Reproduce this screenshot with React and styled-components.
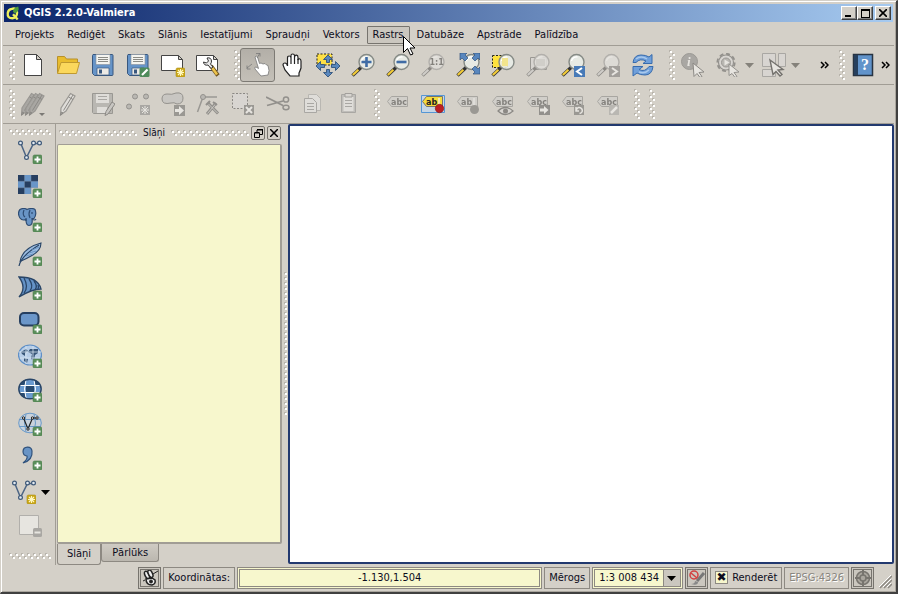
import React from 'react';
import styled, { createGlobalStyle } from 'styled-components';

const GlobalStyle = createGlobalStyle`
  * {
    box-sizing: border-box;
  }
  body {
    margin: 0;
    background: #d4d0c8;
    color: #0c0c1c;
    font: 11px/14px 'DejaVu Sans Condensed', 'Noto Sans', sans-serif;
  }
  button, input, select {
    font: inherit;
    color: inherit;
    margin: 0;
    padding: 0;
  }
  svg {
    display: block;
    flex: none;
  }
`;

const Window = styled.div`
  display: flex;
  flex-direction: column;
  min-height: 100vh;
  padding: 2px;
  background: #d4d0c8;
  border: 1px solid #d4d0c8;
  border-right: 2px solid #404040;
  border-bottom: 2px solid #404040;
  box-shadow: inset 1px 1px 0 #fff, inset -1px -1px 0 #aaa69e;
`;

const TitleBar = styled.header`
  display: flex;
  align-items: center;
  height: 18px;
  margin: 1px 1px 0;
  padding: 0 2px 0 2px;
  background: linear-gradient(90deg, #0a246a, #a6caf0);
`;

const Title = styled.h1`
  flex: 1;
  margin: 0 0 0 4px;
  color: #fff;
  font-size: 11px;
  line-height: 14px;
`;

const CaptionButton = styled.button`
  display: flex;
  align-items: center;
  justify-content: center;
  width: 16px;
  height: 14px;
  margin-left: ${props => (props.$apart ? '2px' : '0')};
  background: #d4d0c8;
  border: 1px solid;
  border-color: #fff #404040 #404040 #fff;
  box-shadow: inset -1px -1px 0 #808080;
`;

const MenuBar = styled.nav`
  display: flex;
  align-items: center;
  gap: 1px;
  height: 24px;
  padding: 2px 6px 0;
  border-bottom: 1px solid #a19d95;
`;

const MenuItem = styled.button`
  position: relative;
  height: 18px;
  padding: 0 5px;
  white-space: nowrap;
  border: 1px solid ${props => (props.$hover ? '#77746e' : 'transparent')};
  border-radius: 1px;
  background: ${props => (props.$hover ? '#cbc7bf' : 'none')};
`;

const Pointer = styled.svg`
  position: absolute;
  right: -6px;
  top: 9px;
  z-index: 2;
`;

const ToolRow = styled.div`
  display: flex;
  align-items: center;
  height: 39px;
  padding: 0 3px 0 6px;
  border-bottom: 1px solid #a19d95;
`;

const ToolButton = styled.button`
  display: flex;
  align-items: center;
  justify-content: center;
  flex: none;
  width: ${props => (props.$narrow ? '11px' : '35px')};
  height: 34px;
  border: 1px solid ${props => (props.$pressed ? '#7d7a74' : 'transparent')};
  border-radius: 3px;
  background: ${props =>
    props.$pressed ? 'linear-gradient(#b3afa8, #c4c0b8)' : 'none'};
  &:disabled svg {
    filter: grayscale(1);
    opacity: 0.45;
  }
`;

const Grip = styled.svg`
  width: 6px;
  height: 30px;
  margin-left: ${props => (props.$gap ? props.$gap : '0')};
`;

const FlatGrip = styled.svg`
  width: 42px;
  height: 6px;
`;

const Spacer = styled.div`
  flex: ${props => (props.$width ? `0 0 ${props.$width}` : '1')};
`;

const Main = styled.main`
  display: flex;
  flex: 1;
  padding-left: 1px;
`;

const SideBar = styled.div`
  display: flex;
  flex-direction: column;
  align-items: center;
  width: 52px;
  padding: 5px 0 6px;
  border-right: 1px solid #a19d95;
`;

const SideRow = styled.div`
  display: flex;
  align-items: center;
  width: 51px;
  height: 34px;
  padding-left: ${props => (props.$menu ? '2px' : '8px')};
`;

const DropIcon = styled.svg`
  width: 9px;
  height: 5px;
  margin-right: 2px;
`;

const Dock = styled.aside`
  display: flex;
  flex-direction: column;
  width: 226px;
  padding-left: 1px;
`;

const DockTitle = styled.div`
  display: flex;
  align-items: center;
  gap: 2px;
  height: 20px;
  padding: 0 1px 2px 2px;
  h2 {
    margin: 0 4px;
    font-size: 10px;
    font-weight: normal;
  }
`;

const DockGrip = styled.svg`
  flex: 1 1 0;
  min-width: 0;
  height: 6px;
`;

const DockButton = styled.button`
  display: flex;
  align-items: center;
  justify-content: center;
  width: 14px;
  height: 14px;
  background: #d4d0c8;
  border: 1px solid #77746e;
  border-radius: 2px;
`;

const LayerTree = styled.div`
  flex: 1;
  background: #f7f7cd;
  border: 2px solid #a19d95;
  border-width: 1px 2px 2px 1px;
  border-radius: 2px;
`;

const Tabs = styled.div`
  display: flex;
  align-items: flex-start;
  height: 21px;
`;

const Tab = styled.button`
  height: ${props => (props.$active ? '21px' : '18px')};
  padding: 0 ${props => (props.$active ? '9px' : '10px')};
  border: 1px solid #8d8982;
  border-top: 0;
  border-radius: 0 0 3px 3px;
  background: ${props =>
    props.$active ? '#d4d0c8' : 'linear-gradient(#cfcbc3, #bbb7af)'};
`;

const Splitter = styled.div`
  display: flex;
  align-items: center;
  width: 6px;
  padding-left: 2px;
`;

const MapCanvas = styled.section`
  flex: 1;
  margin-bottom: 1px;
  background: #fff;
  border: 2px solid #22396f;
  border-radius: 2px;
`;

const StatusBar = styled.footer`
  display: flex;
  align-items: center;
  gap: 2px;
  height: 25px;
  padding: 0 2px 0 0;
`;

const Cell = styled.label`
  display: flex;
  align-items: center;
  justify-content: center;
  gap: 4px;
  height: 22px;
  padding: 0 4px;
  white-space: nowrap;
  border: 1px solid #8d8982;
  color: ${props => (props.$off ? '#89867f' : 'inherit')};
  text-shadow: ${props => (props.$off ? '1px 1px 0 #fff' : 'none')};
`;

const StatusButton = styled.button`
  display: flex;
  align-items: center;
  justify-content: center;
  width: 23px;
  height: 22px;
  background: #cbc7bf;
  border: 3px double #77746e;
`;

const Coordinates = styled.input`
  flex: 1;
  min-width: 80px;
  height: 22px;
  text-align: center;
  background: #f7f7cd;
  border: 3px double #8d8982;
`;

const ScaleBox = styled.div`
  display: flex;
  align-items: center;
  position: relative;
  width: 91px;
  height: 22px;
  border: 3px double #8d8982;
  background: #f7f7cd;
  svg {
    position: absolute;
    right: 0;
    top: 0;
    pointer-events: none;
  }
`;

const ScaleSelect = styled.select`
  appearance: none;
  width: 100%;
  height: 16px;
  padding-left: 4px;
  border: 0;
  background: none;
`;

const Tick = styled.input`
  appearance: none;
  width: 13px;
  height: 13px;
  border: 1px solid #8d8982;
  background: #f7f7cd;
  display: grid;
  place-items: center;
  &:checked::before {
    content: '✖';
    font: 12px/11px 'DejaVu Sans', sans-serif;
  }
`;

const Icon = ({ children, size = 24 }) => (
  <svg width={size} height={size} viewBox="0 0 24 24" fill="none" aria-hidden="true">
    {children}
  </svg>
);

const Plus = () => (
  <>
    <rect x="15" y="15" width="9" height="9" rx="1.5" fill="#5b8f5b" stroke="#4a7d4b" strokeWidth=".6" />
    <path d="M19.5 16.5v6M16.5 19.5h6" stroke="#fff" strokeWidth="1.8" />
  </>
);

const Star = () => (
  <>
    <rect x="15" y="15" width="9" height="9" rx="1.5" fill="#cba81a" stroke="#ad8d10" strokeWidth=".6" />
    <path d="M19.5 16v7M16 19.5h7M17 17l5 5M22 17l-5 5" stroke="#fff8c0" strokeWidth="1.1" />
  </>
);

const Lens = ({ children }) => (
  <>
    <path d="M1.5 22.5L10 14.5" stroke="#333" strokeWidth="3.4" />
    <path d="M1.8 22L7.4 16.8" stroke="#f3cc38" strokeWidth="2.2" />
    <circle cx="15.5" cy="9" r="7.5" fill="#e9ece7" fillOpacity=".9" stroke="#858a85" strokeWidth="1.4" />
    <path d="M10.5 8a5 5 0 0 1 6-4" stroke="#fff" strokeWidth="1.4" />
    {children}
  </>
);

const Disk = () => (
  <>
    <path d="M2 1.5h19q1 0 1 1v19q0 1-1 1H3.5L1.5 20.500V2.500z" fill="#6694c8" stroke="#38577e" />
    <path d="M5 1.500h14v10H5z" fill="#f4f4f0" stroke="#8a9099" strokeWidth=".6" />
    <path d="M7 4.500h10M7 6.500h10M7 8.500h10" stroke="#8b8b85" />
    <path d="M6 15h12v7H6z" fill="#eceae5" stroke="#38577e" strokeWidth=".7" />
    <path d="M8 16.500h3v4H8z" fill="#38577e" />
  </>
);

const Label = ({ text = 'abc', children, fill = '#d0cec8' }) => (
  <>
    <path d="M5.500 4.500H21.500V14.500H5.500L1.500 9.500z" fill={fill} stroke="#77746e" />
    <text x="5" y="12.500" fontSize="8" fontWeight="bold" fontFamily="DejaVu Sans, sans-serif" fill="#222">
      {text}
    </text>
    {children}
  </>
);

const Nodes = () => (
  <>
    <path d="M3 4L8.500 17.500L15.500 3.500h6" stroke="#4b6484" strokeWidth="1.5" />
    <g fill="#e4ebf2" stroke="#3d5878" strokeWidth="1.2">
      <circle cx="2.500" cy="3" r="1.900" />
      <circle cx="8.500" cy="17.500" r="1.900" />
      <circle cx="15.500" cy="3" r="1.900" />
      <circle cx="21.500" cy="3" r="1.900" />
    </g>
  </>
);

const Pencil = ({ x = 0, fill = '#eee' }) => (
  <g transform={`translate(${x} 0)`}>
    <path d="M14.500 1.500l4.500 2.500-9 15-5.500 4 .5-7z" fill={fill} stroke="#555" strokeWidth="1.200" />
    <path d="M17 3L7.500 18.500M12.500 5l4.500 2.500M4.500 23l1-3 1.500 1z" stroke="#333" />
  </g>
);

const MoveArrows = () => (
  <path
    d="M12 2l4.500 4.500h-3v3h-3v-3h-3zM12 24l-4.500-4.500h3v-3h3v3h3zM0 13l4.500-4.500v3h4v3h-4v3zM24 13l-4.500-4.500v3h-4v3h4v3z"
    fill="#5987be"
    stroke="#30527c"
    strokeWidth=".9"
  />
);

const drawings = {
  blank: <path d="M3.500 1.500h12l5 5v16h-17zM15.500 1.500v5h5" fill="#fff" stroke="#444" />,
  open: (
    <>
      <path d="M1.500 20V3.500h7l2 2.500h11v4" fill="#e9bd2e" stroke="#b7902a" />
      <path d="M1.500 20.500L5 9.500h18.500L20.500 20.500z" fill="#fbd85c" stroke="#c09a30" />
    </>
  ),
  save: <Disk />,
  saveAs: (
    <>
      <Disk />
      <rect x="13.500" y="14.500" width="10" height="9.500" rx="1.500" fill="#4e8b5a" />
      <path d="M16 22l5.500-5.500" stroke="#fff" strokeWidth="2.200" />
    </>
  ),
  composer: (
    <>
      <path d="M.5 2.500h17l4 4v11H.5zM17.500 2.500v4h4" fill="#fff" stroke="#444" />
      <Star />
    </>
  ),
  manager: (
    <>
      <path d="M.5 2.500h17l4 4v11H.5zM17.500 2.500v4h4" fill="#fff" stroke="#444" />
      <path d="M15 13l7 9.500" stroke="#6f5520" strokeWidth="4" />
      <path d="M16 14.500l5 7" stroke="#edc34b" strokeWidth="2.500" />
      <path d="M11 5q4-1 4.500 3 0 2-1 3l2.500 3-2 1.500-3-3.500q-4 1-4.500-3l3 1 2-2z" fill="#e8e8e8" stroke="#333" />
    </>
  ),
  touch: (
    <>
      <path d="M9 4q1-2 2.500 0l2 6.500 1.500-.5 2 1 2-.5 1.500 1.500 1.500.5 1 5-1 4.500-7 1-6-7q-1-2 1-2l2.500 1.500z" fill="#fff" stroke="#777" strokeWidth=".8" />
      <path d="M1 15l5-4M11 5l3-5M1 12.500v3.500h3.500M10 .5h4v3" stroke="#777" strokeWidth=".8" />
    </>
  ),
  hand: (
    <>
      <path
        d="M6.500 13V5q0-2 1.700-2T10 5V2.500Q10 1 11.700 1t1.800 1.500V4Q14 2 15.500 2.200T17 4.500V7q.5-1.500 1.700-1.200T20 8v7q-1 3-2 5v3H9L4 17 2 12q0-2 2-2t2.500 3z"
        fill="#fff" stroke="#222" strokeWidth="1.200"
      />
      <path d="M10 5v6M13.500 4v7M17 6v5" stroke="#222" strokeWidth="1.200" />
    </>
  ),
  panSelection: (
    <>
      <path d="M1 1h15v11H1z" fill="#fde047" stroke="#222" strokeDasharray="2 1.500" />
      <MoveArrows />
    </>
  ),
  zoomIn: <Lens><path d="M15.500 4v10M10.500 9h10" stroke="#3f6ca5" strokeWidth="2.600" /></Lens>,
  zoomOut: <Lens><path d="M10.500 9h10" stroke="#3f6ca5" strokeWidth="2.600" /></Lens>,
  actual: (
    <Lens>
      <text x="8.500" y="12" fontSize="8" fontWeight="bold" fontFamily="DejaVu Sans, sans-serif" fill="#222">1:1</text>
    </Lens>
  ),
  full: (
    <>
      <Lens />
      <path
        d="M4 0h7L9 2l3 3-3 3-3-3-2 2zM24 0v7l-2-2-3 3-3-3 3-3-2-2zM24 21h-7l2-2-3-3 3-3 3 3 2-2z"
        fill="#5987be" stroke="#30527c" strokeWidth=".7"
      />
    </>
  ),
  zoomSelection: (
    <>
      <path d="M1.500 2.500h15v12h-15z" fill="#ffe23c" stroke="#222" strokeDasharray="2 1.500" />
      <Lens><path d="M11 5h6v8h-6z" fill="#f2e58d" /></Lens>
    </>
  ),
  zoomLayer: (
    <>
      <path d="M4.500 4.500h16v12h-16z" fill="#ddd" stroke="#555" />
      <Lens><path d="M10 6h9v7h-9z" fill="#ccc" /></Lens>
    </>
  ),
  zoomLast: (
    <Lens>
      <path d="M13 13h11v11H13z" fill="#477ab7" />
      <path d="M21 15l-5 3.500 5 3.500" stroke="#fff" strokeWidth="2" />
    </Lens>
  ),
  zoomNext: (
    <Lens>
      <path d="M13 13h11v11H13z" fill="#666" />
      <path d="M16 15l5 3.500-5 3.500" stroke="#fff" strokeWidth="2" />
    </Lens>
  ),
  refresh: (
    <>
      <path d="M2 9.500Q3 2 10 2q5 0 8 2l3-2.500v9h-9l3-2.500q-6-3-10 1.500z" fill="#6f9fda" stroke="#376bad" />
      <path d="M22 13.500q-1 8.500-8 8.500-5 0-8-2l-4 3v-9.500h10l-4 3q6 3 10-3z" fill="#6f9fda" stroke="#376bad" />
      <path d="M5 6q5-4 11 0M8 19q6 2 10-2" stroke="#a9c9ec" strokeWidth="1.500" />
    </>
  ),
  identify: (
    <>
      <circle cx="8.500" cy="8.500" r="8" fill="#777" stroke="#555" />
      <text x="6" y="13" fontSize="13" fontWeight="bold" fontStyle="italic" fontFamily="Liberation Serif, serif" fill="#fff">i</text>
      <path d="M12 10l11 9-5 .5 3 4-2 1-3-4-3 3z" fill="#fff" stroke="#333" />
    </>
  ),
  action: (
    <>
      <circle cx="10" cy="9.500" r="8.700" stroke="#444" strokeWidth="1.800" strokeDasharray="4 2.800" />
      <circle cx="10" cy="9.500" r="7.500" fill="#ddd" stroke="#444" strokeWidth="1.200" />
      <circle cx="10" cy="9.500" r="4.500" fill="#999" stroke="#555" />
      <path d="M8.500 6.500l5 3-5 3z" fill="#fff" />
      <path d="M13 11l10 8-5 .5 3 4-2 1-3-4-3 2z" fill="#fff" stroke="#444" />
    </>
  ),
  select: (
    <>
      <path d="M.5 .5h13v13H.5zM16.500 .5h7v13h-7zM.5 16.500h13v7H.5z" fill="#ddd" stroke="#777" />
      <path d="M8 7l13 9.500-5 .5 4 4.500-2 1.500-4-4.500-3 3z" fill="#fff" stroke="#000" strokeWidth="1.400" />
    </>
  ),
  help: (
    <>
      <path d="M2.500 1.500h19v21h-19z" fill="#6193ca" stroke="#273342" strokeWidth="1.500" />
      <path d="M3 2h4v20H3z" fill="#263f5d" />
      <text x="10" y="17" fontSize="16" fontWeight="bold" fontFamily="Liberation Serif, serif" fill="#fff">?</text>
    </>
  ),
  edits: (
    <>
      <Pencil x={-4} fill="#777" />
      <Pencil fill="#777" />
      <Pencil x={4} fill="#777" />
      <path d="M18 21h6l-3 3z" fill="#111" />
    </>
  ),
  pencil: <Pencil />,
  saveEdits: (
    <>
      <path d="M1.500 1.500h20v20h-19l-1-1z" fill="#999" stroke="#555" />
      <path d="M5 2h13v9H5z" fill="#eee" />
      <path d="M7 4.500h9M7 7.500h9" stroke="#777" />
      <path d="M6 15h10v6H6z" fill="#eee" />
      <path d="M21 10l3 2-7 10-3 1.500 1-4z" fill="#bbb" stroke="#333" />
    </>
  ),
  addPoint: (
    <>
      <g fill="#999" stroke="#444">
        <circle cx="3" cy="14.500" r="2.500" />
        <circle cx="9" cy="4.500" r="2.500" />
        <circle cx="20" cy="4.500" r="2.500" />
      </g>
      <path d="M14 13h10v10H14z" fill="#777" />
      <path d="M19 14v8M15 18h8M16 15l6 6M22 15l-6 6" stroke="#fff" />
    </>
  ),
  moveFeature: (
    <>
      <path d="M1 7q0-5 5-5 5 1 9-1 7-1 7 5 0 6-6 6-3-2-6-1-9 2-9-4z" fill="#bbb" stroke="#444" />
      <path d="M13 13h11v11H13z" fill="#555" />
      <path d="M14 17h4v-3l5 4.500-5 4.500v-3h-4z" fill="#fff" />
    </>
  ),
  nodeTool: (
    <>
      <path d="M1.500 20L7 5l14 0" stroke="#555" strokeWidth="1.500" />
      <circle cx="7" cy="5" r="2.500" fill="#999" stroke="#444" />
      <path d="M12 11l10 10.500M20 11l-9 11" stroke="#444" strokeWidth="3" />
      <path d="M12.500 12l9 9M19.500 12l-8 9.500" stroke="#bbb" />
      <path d="M10 13l4-4M17 10l4 3" stroke="#444" strokeWidth="2" />
    </>
  ),
  remove: (
    <>
      <path d="M1.500 1.500h15v15h-15z" fill="#ddd" stroke="#333" strokeDasharray="2 1.500" />
      <path d="M13 13h10v10H13z" fill="#555" />
      <path d="M15 15l6 6M21 15l-6 6" stroke="#fff" strokeWidth="2" />
    </>
  ),
  cut: (
    <>
      <path d="M0 5l17 8.500M1 13.500l16-4.500" stroke="#444" strokeWidth="1.800" />
      <circle cx="20" cy="7.500" r="2.600" stroke="#444" strokeWidth="1.500" />
      <ellipse cx="20" cy="15.500" rx="3" ry="2.200" stroke="#444" strokeWidth="1.500" />
    </>
  ),
  copy: (
    <>
      <path d="M7.500 2.500h8l4 4v12h-12z" fill="#eee" stroke="#999" />
      <path d="M3.500 6.500h8l4 4v10h-12z" fill="#eee" stroke="#777" />
      <path d="M6 11.500h7M6 14.500h7M6 17.500h7" stroke="#777" />
    </>
  ),
  paste: (
    <>
      <path d="M5.500 2.500h14v18h-14z" fill="#aaa" stroke="#777" />
      <path d="M7.500 5h10v14h-10z" fill="#eee" />
      <path d="M9 1.500h7V5H9z" fill="#ddd" stroke="#666" />
      <path d="M9 8.500h7M9 11.500h7M9 14.500h7" stroke="#777" />
    </>
  ),
  label: <Label />,
  pinLabels: (
    <>
      <path d="M.5 3.500h23v17H.5z" fill="#c7d6e5" stroke="#5596d5" />
      <Label text="ab" fill="#f6dc3c">
        <path d="M18 6v8" stroke="#f5efc0" strokeWidth="1.800" />
        <circle cx="18.500" cy="16.500" r="4.200" fill="#bd1f24" stroke="#7f1418" strokeWidth=".6" />
      </Label>
    </>
  ),
  pinLabel: (
    <Label text="ab">
      <path d="M18 6v8" stroke="#eee" strokeWidth="2" />
      <circle cx="18.500" cy="17.500" r="4.500" fill="#555" />
    </Label>
  ),
  showLabel: (
    <Label>
      <path d="M7 19q7-7 15 0-8 7-15 0z" fill="#ddd" stroke="#333" strokeWidth="1.200" />
      <circle cx="14.500" cy="19" r="2.500" fill="#333" />
    </Label>
  ),
  moveLabel: (
    <Label>
      <path d="M13 13h11v10H13z" fill="#444" />
      <path d="M14 16.500h4V14l4.500 4-4.500 4v-2.500h-4z" fill="#fff" />
    </Label>
  ),
  rotateLabel: (
    <Label>
      <path d="M13 13h10v10H13z" fill="#555" />
      <path d="M15.500 19.500a3 3 0 1 1 3 2M15 15v4h3" stroke="#fff" strokeWidth="1.500" />
    </Label>
  ),
  changeLabel: (
    <Label>
      <path d="M13 13h10v10H13z" fill="#999" />
      <path d="M15 21l6-6" stroke="#fff" strokeWidth="2.500" />
    </Label>
  ),
  vector: <><Nodes /><Plus /></>,
  raster: (
    <>
      <path d="M0 1h20v19H0z" fill="#6996c8" />
      <path d="M0 1h6.500v6.300H0zM13 1h7v6.300h-7zM6.500 7.300H13v6.400H6.500zM0 13.700h6.500V20H0z" fill="#263e60" />
      <path d="M13 13.700h7V20h-7z" fill="#d4d0c8" />
      <path d="M6.500 1v19M13 1v19M0 7.300h20M0 13.700h20" stroke="#7588a0" strokeWidth=".5" />
      <Plus />
    </>
  ),
  postgis: (
    <>
      <path d="M2 1.500q4-2 7 0 5-2 8 0 2 5-1 9h-2q1 7-3 7-3 0-3-6Q4 13 2 10q-3-5 0-8.500z" fill="#6994c5" stroke="#2e4c73" strokeWidth="1.200" />
      <path d="M6 2Q4 7 7 9M12 2q-2 4 0 8M8 10v3M14 4v2M14 11q3 2 4 0" stroke="#2e4c73" strokeWidth="1.200" />
      <Plus />
    </>
  ),
  spatialite: (
    <>
      <path d="M2 20Q4 6 23 1q0 8-10 13-5 3-10 5" fill="#9cbce0" stroke="#294567" strokeWidth="1.100" />
      <path d="M1 24Q3 14 21 3" stroke="#294567" strokeWidth="1.200" />
      <path d="M8 14l7-2M11 11l7-2M14 8l7-3" stroke="#6994c5" />
      <Plus />
    </>
  ),
  mssql: (
    <>
      <path d="M1 1q19 0 22 12-9 0-22 8Q9 12 1 1z" fill="#6593c7" stroke="#294567" strokeWidth="1.300" />
      <path d="M6 2q5 9 0 15M11 3q5 7 1 12M16 5q4 5 1 9M20 9q1 2 0 4" stroke="#294567" strokeWidth="1.300" />
      <Plus />
    </>
  ),
  oracle: (
    <>
      <rect x="2" y="3" width="18.500" height="12.500" rx="4" fill="#6b96c9" stroke="#263f60" strokeWidth="2" />
      <Plus />
    </>
  ),
  wms: (
    <>
      <ellipse cx="12" cy="11" rx="11.500" ry="10" fill="#b8cee7" stroke="#5e8fc7" strokeWidth="1.200" />
      <path d="M3 8l5-3 2 2-3 2v3l-3-2zM12 5l8 0v4l-3 2-1 5-3-1 1-5-4-2zM6 14l4 1-1 4-3-2z" fill="#375577" />
      <path d="M1 8h22M2 14h20M8 2v18M15 2v18" stroke="#d7e4f1" strokeWidth=".8" />
      <Plus />
    </>
  ),
  wcs: (
    <>
      <ellipse cx="12" cy="11" rx="11.200" ry="9.800" fill="#6b9bd0" />
      <path d="M8 8h8v6H8zM8 1.500Q3 3 1.500 7.500H6.500zM16 1.500q5 1.500 6.500 6H17.500zM1.500 14.500h5L8 20.500Q3 19 1.500 14.500zM22.500 14.500h-5L16 20.500z" fill="#294b70" />
      <path d="M1 7.500h22M1 14.500h22M8 2q-3 9 0 18M16 2q3 9 0 18" stroke="#fff" />
      <ellipse cx="12" cy="11" rx="11.200" ry="9.800" stroke="#294567" strokeWidth="1.400" />
      <Plus />
    </>
  ),
  wfs: (
    <>
      <ellipse cx="12" cy="11" rx="11.300" ry="9.800" fill="#c9d2dc" stroke="#6a9ac9" />
      <path d="M1 7.500h22M1 14.500h22M8 2q-3 9 0 18M16 2q3 9 0 18" stroke="#6a9ac9" />
      <path d="M5.500 6l4.500 11L14.500 6H19" stroke="#222" strokeWidth="1.200" />
      <g fill="#ddd" stroke="#222">
        <circle cx="5.500" cy="6" r="1.200" />
        <circle cx="10" cy="17" r="1.200" />
        <circle cx="14.500" cy="6" r="1.200" />
        <circle cx="19" cy="6" r="1.200" />
      </g>
      <Plus />
    </>
  ),
  csv: (
    <>
      <path d="M9 10a4.500 4.500 0 1 1 5-5q1 9-9 12 5-4 4-7z" fill="#6994c5" stroke="#30527c" strokeWidth="1.200" />
      <Plus />
    </>
  ),
  minus: (
    <>
      <path d="M1.500 1.500h19v19h-19z" fill="#fff" stroke="#888" />
      <rect x="15" y="14" width="9" height="9" rx="1.500" fill="#777" />
      <path d="M16.500 18.500h6" stroke="#fff" strokeWidth="2" />
    </>
  )
};

const menus = [
  'Projekts', 'Rediģēt', 'Skats', 'Slānis', 'Iestatījumi', 'Spraudņi',
  'Vektors', 'Rastrs', 'Datubāze', 'Apstrāde', 'Palīdzība'
];
const fileTools = ['blank', 'open', 'save', 'saveAs', 'composer', 'manager'];
const mapTools = [
  'touch', 'hand', 'panSelection', 'zoomIn', 'zoomOut', 'actual', 'full',
  'zoomSelection', 'zoomLayer', 'zoomLast', 'zoomNext', 'refresh'
];
const editTools = [
  'edits', 'pencil', 'saveEdits', 'addPoint', 'moveFeature', 'nodeTool',
  'remove', 'cut', 'copy', 'paste'
];
const labelTools = [
  'label', 'pinLabels', 'pinLabel', 'showLabel', 'moveLabel', 'rotateLabel', 'changeLabel'
];
const layerTools = [
  'vector', 'raster', 'postgis', 'spatialite', 'mssql', 'oracle', 'wms', 'wcs', 'wfs', 'csv'
];
const disabledTools = [
  'actual', 'zoomLayer', 'zoomNext', 'identify', 'action', 'select', 'minus',
  ...editTools,
  ...labelTools.filter(name => name !== 'pinLabels')
];

const Tool = ({ name }) => (
  <ToolButton
    aria-label={name}
    disabled={disabledTools.includes(name)}
    $pressed={name === 'touch'}
  >
    <Icon>{drawings[name]}</Icon>
  </ToolButton>
);

const Handle = ({ gap }) => (
  <Grip $gap={gap}>
    <rect width="6" height="30" fill="url(#gripDots)" />
  </Grip>
);

const DropArrow = ({ color = '#85827b' }) => (
  <DropIcon>
    <path d="M0 0h9L4.500 5z" fill={color} />
  </DropIcon>
);

const More = () => (
  <ToolButton $narrow aria-label="more">
    <svg width="9" height="8" fill="none" stroke="#000" strokeWidth="1.500">
      <path d="M1 1l3 3-3 3M5 1l3 3-3 3" />
    </svg>
  </ToolButton>
);

const App = () => (
  <>
    <GlobalStyle />
    <Window>
      <svg width="0" height="0">
        <defs>
          <pattern id="gripDots" width="6" height="6" patternUnits="userSpaceOnUse">
            <path d="M0 0h2v2H0zM3 3h2v2H3z" fill="#b8b4ac" />
            <path d="M1 1h2v2H1zM4 4h2v2H4z" fill="#fff" />
          </pattern>
          <pattern id="splitDots" width="5" height="5" patternUnits="userSpaceOnUse">
            <path d="M0 0h2v2H0z" fill="#b8b4ac" />
            <path d="M1 1h2v2H1z" fill="#fff" />
          </pattern>
        </defs>
      </svg>
      <TitleBar>
        <Icon size={14}>
          <path d="M10 5q8-3 9 6 0 9-8 10-9 0-8-9 1-6 7-7z" stroke="#eef05c" strokeWidth="4" />
          <path d="M12 14l8 9" stroke="#eef05c" strokeWidth="4" />
          <path d="M12 10Q12 3 21 1q3 8-6 12z" fill="#4f9b3c" />
        </Icon>
        <Title>QGIS 2.2.0-Valmiera</Title>
        <CaptionButton aria-label="minimize">
          <svg width="8" height="8"><path d="M0 6h6v2H0z" /></svg>
        </CaptionButton>
        <CaptionButton aria-label="maximize">
          <svg width="9" height="9"><path d="M0 0h9v9H0zM1 2v6h7V2z" fillRule="evenodd" /></svg>
        </CaptionButton>
        <CaptionButton $apart aria-label="close">
          <svg width="8" height="8" stroke="#000" strokeWidth="1.600"><path d="M0 0l8 8M8 0L0 8" /></svg>
        </CaptionButton>
      </TitleBar>
      <MenuBar>
        {menus.map(item => (
          <MenuItem key={item} $hover={item === 'Rastrs'}>
            {item}
            {item === 'Rastrs' && (
              <Pointer width="12" height="20">
                <path d="M.5 .5v16l4-4 3 6.500 2.500-1-3-6h5z" fill="#fff" stroke="#000" />
              </Pointer>
            )}
          </MenuItem>
        ))}
      </MenuBar>
      <ToolRow>
        <Handle />
        {fileTools.map(name => <Tool key={name} name={name} />)}
        <Handle gap="9px" />
        {mapTools.map(name => <Tool key={name} name={name} />)}
        <Handle gap="9px" />
        <Tool name="identify" />
        <Tool name="action" />
        <DropArrow />
        <Tool name="select" />
        <DropArrow />
        <Spacer />
        <More />
        <Handle gap="9px" />
        <Tool name="help" />
        <More />
      </ToolRow>
      <ToolRow>
        <Handle />
        {editTools.map(name => <Tool key={name} name={name} />)}
        <Handle gap="9px" />
        {labelTools.map(name => <Tool key={name} name={name} />)}
        <Handle gap="9px" />
        <Handle gap="9px" />
      </ToolRow>
      <Main>
        <SideBar>
          <FlatGrip><rect width="42" height="6" fill="url(#gripDots)" /></FlatGrip>
          {layerTools.map(name => (
            <SideRow key={name}>
              <Tool name={name} />
            </SideRow>
          ))}
          <SideRow $menu>
            <ToolButton aria-label="new layer">
              <Icon><Nodes /><Star /></Icon>
            </ToolButton>
            <DropArrow color="#000" />
          </SideRow>
          <SideRow>
            <Tool name="minus" />
          </SideRow>
          <Spacer />
          <FlatGrip><rect width="42" height="6" fill="url(#gripDots)" /></FlatGrip>
        </SideBar>
        <Dock>
          <DockTitle>
            <DockGrip><rect width="100%" height="6" fill="url(#gripDots)" /></DockGrip>
            <h2>Slāņi</h2>
            <DockGrip><rect width="100%" height="6" fill="url(#gripDots)" /></DockGrip>
            <DockButton aria-label="float">
              <svg width="9" height="9" fill="none" stroke="#000">
                <path d="M3 1h5.500v4.500H6M.5 4h5v4.500h-5zM3 1v2M3 .5h6M.5 3.500h5" />
              </svg>
            </DockButton>
            <DockButton aria-label="close panel">
              <svg width="8" height="8" stroke="#000" strokeWidth="1.500"><path d="M0 0l8 8M8 0L0 8" /></svg>
            </DockButton>
          </DockTitle>
          <LayerTree />
          <Tabs>
            <Tab $active>Slāņi</Tab>
            <Tab>Pārlūks</Tab>
          </Tabs>
        </Dock>
        <Splitter>
          <svg width="3" height="145"><rect width="3" height="145" fill="url(#splitDots)" /></svg>
        </Splitter>
        <MapCanvas />
      </Main>
      <StatusBar>
        <Spacer $width="15%" />
        <StatusButton aria-label="toggle extents">
          <svg width="16" height="16" fill="none" stroke="#222">
            <ellipse cx="5" cy="5" rx="2" ry="4" transform="rotate(-25 5 5)" fill="#eee" strokeWidth="1.500" />
            <ellipse cx="8.500" cy="4" rx="2" ry="4" transform="rotate(-25 8 4)" fill="#eee" strokeWidth="1.500" />
            <path d="M4 9q0 6 6 6 4-1 3-5l-3-2z" fill="#eee" strokeWidth="1.500" />
            <circle cx="9" cy="11.500" r="1.500" fill="#222" />
            <path d="M11 4l5-3M1 11l2-1" />
          </svg>
        </StatusButton>
        <Cell htmlFor="coords">Koordinātas:</Cell>
        <Coordinates id="coords" defaultValue="-1.130,1.504" />
        <Cell htmlFor="scale">Mērogs</Cell>
        <ScaleBox>
          <ScaleSelect id="scale">
            <option>1:3 008 434</option>
          </ScaleSelect>
          <svg width="17" height="16">
            <path d="M0 0h17v16H0z" fill="#cbc7bf" />
            <path d="M.5 0v16" stroke="#8d8982" />
            <path d="M4 6h9l-4.500 5z" />
          </svg>
        </ScaleBox>
        <StatusButton aria-label="stop rendering">
          <svg width="18" height="16" fill="none">
            <path d="M16 3L9 11" stroke="#777" strokeWidth="3" />
            <path d="M3 14q4 0 4-3l3 1q0 4-7 2z" fill="#888" />
            <circle cx="6" cy="5" r="4" stroke="#d24141" strokeWidth="1.500" />
            <path d="M3 3l6 5" stroke="#d24141" strokeWidth="1.500" />
          </svg>
        </StatusButton>
        <Cell>
          <Tick type="checkbox" defaultChecked />
          Renderēt
        </Cell>
        <Cell as="div" $off>EPSG:4326</Cell>
        <StatusButton aria-label="projection">
          <svg width="16" height="16" fill="none" stroke="#77746e" strokeWidth="1.500">
            <circle cx="8" cy="8" r="6.500" fill="#aaa69e" />
            <circle cx="8" cy="8" r="3" />
            <path d="M8 0v5M8 11v5M0 8h5M11 8h5" strokeWidth="2" />
          </svg>
        </StatusButton>
        <Spacer $width="1px" />
        <svg width="13" height="22" fill="none">
          <path d="M1 21L13 9M5 21l8-8M9 21l4-4" stroke="#8d8982" strokeWidth="1.500" />
          <path d="M0 20L12 8M4 20l8-8M8 20l4-4" stroke="#fff" />
        </svg>
      </StatusBar>
    </Window>
  </>
);

export default App;
